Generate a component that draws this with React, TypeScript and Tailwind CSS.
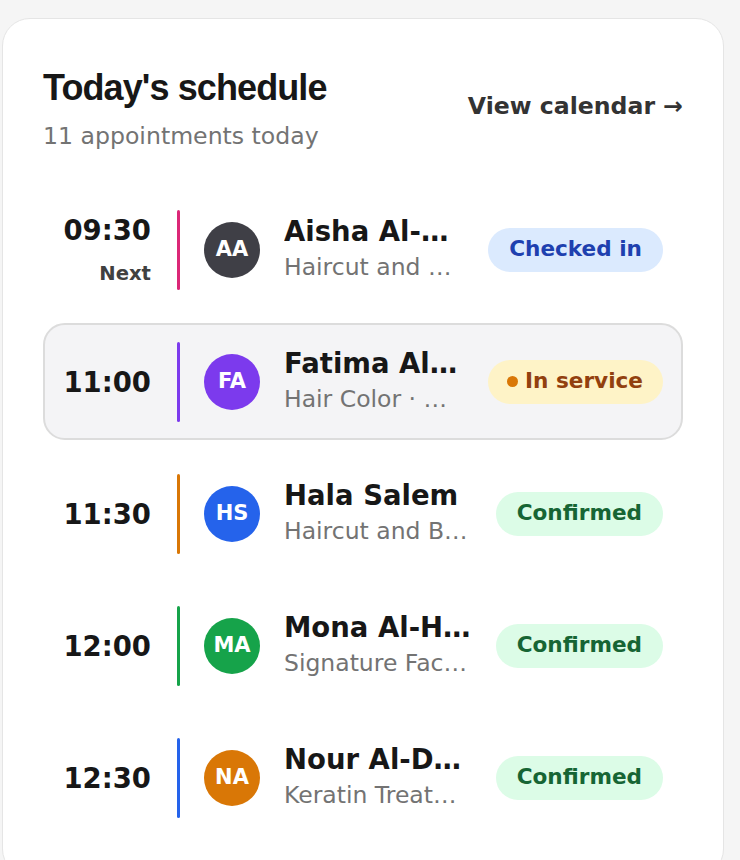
import React from 'react';

type Status = 'checked' | 'service' | 'confirmed';

interface Appointment {
    time: string;
    next?: boolean;
    name: string;
    service: string;
    initials: string;
    avatar: string;
    bar: string;
    status: Status;
    active?: boolean;
}

const appointments: Appointment[] = [
    { time: '09:30', next: true, name: 'Aisha Al-Rashid', service: 'Haircut and Blow-dry', initials: 'AA', avatar: 'bg-[#3f3f46]', bar: 'bg-[#db2777]', status: 'checked' },
    { time: '11:00', name: 'Fatima Al-Zahra', service: 'Hair Color · Highlights', initials: 'FA', avatar: 'bg-[#7c3aed]', bar: 'bg-[#7c3aed]', status: 'service', active: true },
    { time: '11:30', name: 'Hala Salem', service: 'Haircut and Blow-dry', initials: 'HS', avatar: 'bg-[#2563eb]', bar: 'bg-[#d97706]', status: 'confirmed' },
    { time: '12:00', name: 'Mona Al-Harbi', service: 'Signature Facial Treatment', initials: 'MA', avatar: 'bg-[#16a34a]', bar: 'bg-[#16a34a]', status: 'confirmed' },
    { time: '12:30', name: 'Nour Al-Dosari', service: 'Keratin Treatment', initials: 'NA', avatar: 'bg-[#d97706]', bar: 'bg-[#2563eb]', status: 'confirmed' },
];

const StatusBadge: React.FC<{ status: Status }> = ({ status }) => {
    if (status === 'checked') {
        return (
            <span className="shrink-0 h-[44px] px-[21px] flex items-center rounded-full bg-[#dbeafe] text-[#1e40af] text-[21.6px] font-bold">
                Checked in
            </span>
        );
    }
    if (status === 'service') {
        return (
            <span className="shrink-0 h-[44px] pl-[19px] pr-[20px] flex items-center gap-[7px] rounded-full bg-[#fef3c7] text-[#92400e] text-[21.6px] font-bold">
                <span className="w-[11px] h-[11px] rounded-full bg-[#d97706]" />
                In service
            </span>
        );
    }
    return (
        <span className="shrink-0 h-[44px] px-[21px] flex items-center rounded-full bg-[#dcfce7] text-[#166534] text-[21.6px] font-bold">
            Confirmed
        </span>
    );
};

const App: React.FC = () => {
    return (
        <div className="min-h-[860px] bg-[#f5f5f5] pt-[18px] pl-[2px] font-['DejaVu_Sans',sans-serif] overflow-hidden">
            <div className="w-[722px] bg-white border border-[#e5e5e5] rounded-[28px] px-[40px] pt-[47px] pb-[40px]">
                {/* Header */}
                <div className="flex justify-between items-start">
                    <div>
                        <h2 className="font-['Liberation_Sans',sans-serif] font-bold text-[36px] leading-[44px] tracking-[-0.025em] text-[#171717]">
                            Today's schedule
                        </h2>
                        <p className="mt-[9px] text-[23.6px] leading-[35px] text-[#737373]">11 appointments today</p>
                    </div>
                    <a className="mt-[23px] text-[23.6px] leading-[35px] font-bold text-[#333333]">View calendar →</a>
                </div>

                {/* Rows */}
                <div className="mt-[37px] flex flex-col gap-[15px]">
                    {appointments.map((a) => (
                        <div
                            key={a.time}
                            className={`h-[117px] flex items-center pl-[20px] pr-[18px] rounded-[22px] border-2 ${a.active ? 'bg-[#f4f4f6] border-[#dcdcdc]' : 'border-transparent'}`}
                        >
                            <div className="w-[86px] shrink-0 flex flex-col items-end">
                                <span className="text-[27.5px] leading-[34px] font-bold text-[#171717]">{a.time}</span>
                                {a.next && (
                                    <span className="mt-[14px] text-[19.6px] leading-[26px] font-bold text-[#404040]">Next</span>
                                )}
                            </div>
                            <div className={`ml-[26px] w-[3px] h-[80px] rounded-full shrink-0 ${a.bar}`} />
                            <div className={`ml-[24px] w-[56px] h-[56px] rounded-full shrink-0 flex items-center justify-center text-white font-bold text-[21px] ${a.avatar}`}>
                                {a.initials}
                            </div>
                            <div className="ml-[24px] mr-[24px] flex-1 min-w-0">
                                <div className="truncate text-[27.5px] leading-[34px] font-bold text-[#171717]">{a.name}</div>
                                <div className="mt-[2px] truncate text-[23.5px] leading-[35px] text-[#737373]">{a.service}</div>
                            </div>
                            <StatusBadge status={a.status} />
                        </div>
                    ))}
                </div>
            </div>
        </div>
    );
};

export default App;
